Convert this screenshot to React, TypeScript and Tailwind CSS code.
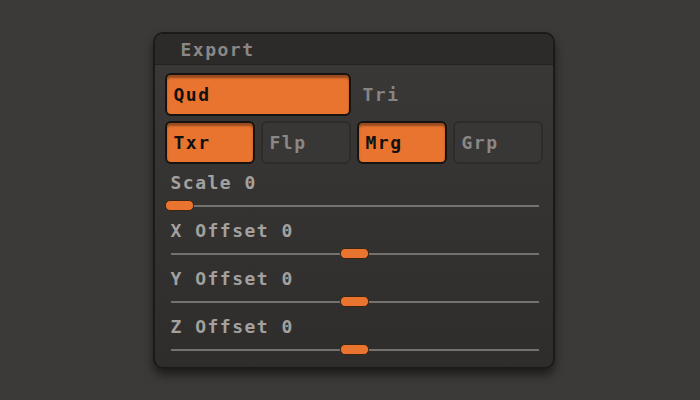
import React from "react";

const font = { fontFamily: '"DejaVu Sans Mono", "Liberation Mono", monospace' };

function Toggle({ label, on, className = "" }: { label: string; on?: boolean; className?: string }) {
  return (
    <div
      className={
        "h-[43px] rounded-[6px] flex items-center pl-[7px] text-[18px] font-bold tracking-[1.5px] " +
        (on
          ? "bg-[#e8742f] border-2 border-[#171310] text-[#111] shadow-[inset_0_3px_2px_rgba(0,0,0,0.35)] "
          : "bg-[#393735] border-2 border-[#2e2c2a] text-[#8a8886] ") +
        className
      }
    >
      {label}
    </div>
  );
}

function Slider({ label, pos }: { label: string; pos: number }) {
  return (
    <div className="flex flex-col">
      <div className="h-[24px] flex items-center pl-[6px] text-[18px] font-bold tracking-[1.5px] text-[#a3a19f]">
        {label}
      </div>
      <div className="relative h-[24px]">
        <div className="absolute left-[6px] right-[4px] top-[11px] h-[2px] bg-[#74726f]" />
        <div
          className="absolute top-[6px] w-[29px] h-[11px] rounded-[5px] bg-[#e8742f] border border-[#3a2414]"
          style={{ left: pos }}
        />
      </div>
    </div>
  );
}

export default function App() {
  return (
    <div className="w-[700px] h-[400px] bg-[#3b3a38] flex justify-center pt-[32px]" style={font}>
      <div className="ml-[7px] w-[402px] h-[337px] rounded-[10px] border-2 border-[#1c1a18] bg-gradient-to-b from-[#3b3937] to-[#2f2d2b] shadow-[0_6px_10px_rgba(0,0,0,0.5)] overflow-hidden flex flex-col">
        <div className="h-[31px] bg-[#2d2b29] border-b border-[#222] flex items-center pl-[26px] text-[18px] font-bold tracking-[1.5px] text-[#8a8886]">
          Export
        </div>
        <div className="flex flex-col px-[10px] pt-[8px]">
          <div className="flex items-center gap-[6px]">
            <Toggle label="Qud" on className="w-[186px]" />
            <div className="pl-[6px] text-[18px] font-bold tracking-[1.5px] text-[#878583]">Tri</div>
          </div>
          <div className="flex gap-[6px] mt-[5px]">
            <Toggle label="Txr" on className="w-[90px]" />
            <Toggle label="Flp" className="w-[90px]" />
            <Toggle label="Mrg" on className="w-[90px]" />
            <Toggle label="Grp" className="w-[90px]" />
          </div>
          <div className="mt-[6px] flex flex-col">
            <Slider label="Scale 0" pos={0} />
            <Slider label="X Offset 0" pos={175} />
            <Slider label="Y Offset 0" pos={175} />
            <Slider label="Z Offset 0" pos={175} />
          </div>
        </div>
      </div>
    </div>
  );
}
